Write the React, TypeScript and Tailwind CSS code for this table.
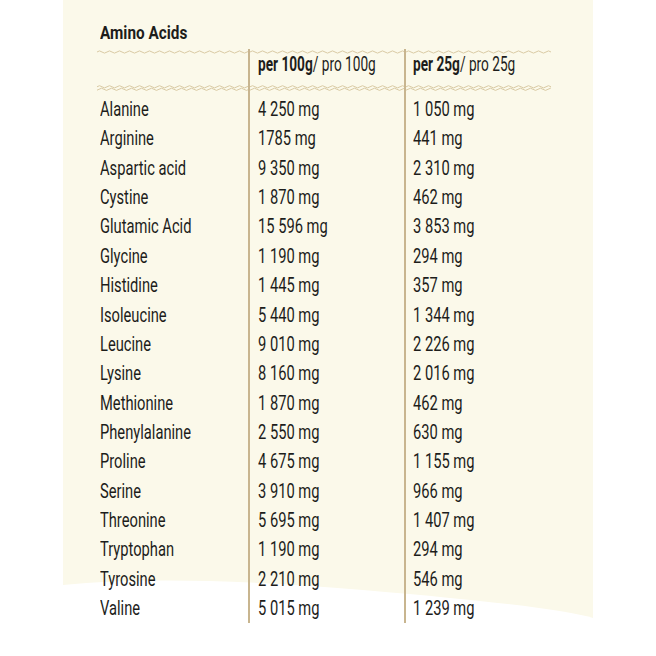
import React from "react";

const rows: [string, string, string][] = [
  ["Alanine", "4 250 mg", "1 050 mg"],
  ["Arginine", "1785 mg", "441 mg"],
  ["Aspartic acid", "9 350 mg", "2 310 mg"],
  ["Cystine", "1 870 mg", "462 mg"],
  ["Glutamic Acid", "15 596 mg", "3 853 mg"],
  ["Glycine", "1 190 mg", "294 mg"],
  ["Histidine", "1 445 mg", "357 mg"],
  ["Isoleucine", "5 440 mg", "1 344 mg"],
  ["Leucine", "9 010 mg", "2 226 mg"],
  ["Lysine", "8 160 mg", "2 016 mg"],
  ["Methionine", "1 870 mg", "462 mg"],
  ["Phenylalanine", "2 550 mg", "630 mg"],
  ["Proline", "4 675 mg", "1 155 mg"],
  ["Serine", "3 910 mg", "966 mg"],
  ["Threonine", "5 695 mg", "1 407 mg"],
  ["Tryptophan", "1 190 mg", "294 mg"],
  ["Tyrosine", "2 210 mg", "546 mg"],
  ["Valine", "5 015 mg", "1 239 mg"],
];

const cellClass = [
  "pl-[3px]",
  "border-l-2 border-[#c8b58f] pl-[8px]",
  "border-l-2 border-[#c8b58f] pl-[7px]",
];

// one wavy stroke, period 10px
function wavePath(y: number, phase: number) {
  let d = `M${-10 + phase} ${y}`;
  for (let x = -10 + phase; x < 170; x += 10) d += " q2.5 -2.2 5 0 t5 0";
  return d;
}

function Wave({ double }: { double?: boolean }) {
  return (
    <svg width="160" height="6" className="block" viewBox="0 0 160 6">
      {double ? (
        <>
          <path d={wavePath(1.8, 0)} fill="none" stroke="#d9caa4" strokeWidth="1" />
          <path d={wavePath(4.3, 2)} fill="none" stroke="#d9caa4" strokeWidth="1" />
        </>
      ) : (
        <path d={wavePath(3, 0)} fill="none" stroke="#d9caa4" strokeWidth="1" />
      )}
    </svg>
  );
}

function WaveRow({ double }: { double?: boolean }) {
  return (
    <div className={`grid grid-cols-[151px_156px_147px] ${double ? "h-[10px]" : "h-[4px]"}`}>
      {[0, 1, 2].map((i) => (
        <div
          key={i}
          className={`overflow-hidden ${i > 0 ? "border-l-2 border-[#c8b58f]" : ""} ${double ? "" : "-mt-px"}`}
        >
          <Wave double={double} />
        </div>
      ))}
    </div>
  );
}

function Narrow({ children, wide }: { children: React.ReactNode; wide?: boolean }) {
  return (
    <span className={`inline-block origin-left whitespace-nowrap ${wide ? "scale-x-[0.82]" : "scale-x-[0.7]"}`}>
      {children}
    </span>
  );
}

export default function App() {
  return (
    <div className="min-h-screen bg-white font-['Roboto',sans-serif] text-[#1d1d1b]">
      <div className="relative ml-[63px] h-[656px] w-[530px] overflow-hidden bg-[#fbf9ea]">
        {/* curved lower edge of the cream card */}
        <svg className="absolute left-0 top-[570px] h-[86px] w-[530px]" viewBox="0 0 530 86">
          <path d="M0 15 Q110 4 300 20 T530 48 V86 H0 Z" fill="#ffffff" />
        </svg>

        <div className="relative pl-[34px] pt-[21px]">
          <h2 className="pl-[3px] text-[18.7px] font-bold leading-[24px]">
            <Narrow wide>Amino Acids</Narrow>
          </h2>

          <div className="mt-[5px] w-[454px]">
            <WaveRow />

            {/* header */}
            <div className="grid h-[31px] grid-cols-[151px_156px_147px] text-[19.5px] leading-[22px]">
              <div className={cellClass[0]} />
              <div className={cellClass[1]}>
                <Narrow>
                  <span className="font-bold">per 100g</span>/ pro 100g
                </Narrow>
              </div>
              <div className={cellClass[2]}>
                <Narrow>
                  <span className="font-bold">per 25g</span>/ pro 25g
                </Narrow>
              </div>
            </div>

            <WaveRow double />

            {rows.map((r) => (
              <div
                key={r[0]}
                className="grid h-[29.37px] grid-cols-[151px_156px_147px] text-[21px] leading-[29.37px]"
              >
                {r.map((c, i) => (
                  <div key={i} className={cellClass[i]}>
                    <Narrow>{c}</Narrow>
                  </div>
                ))}
              </div>
            ))}
          </div>
        </div>
      </div>
    </div>
  );
}
